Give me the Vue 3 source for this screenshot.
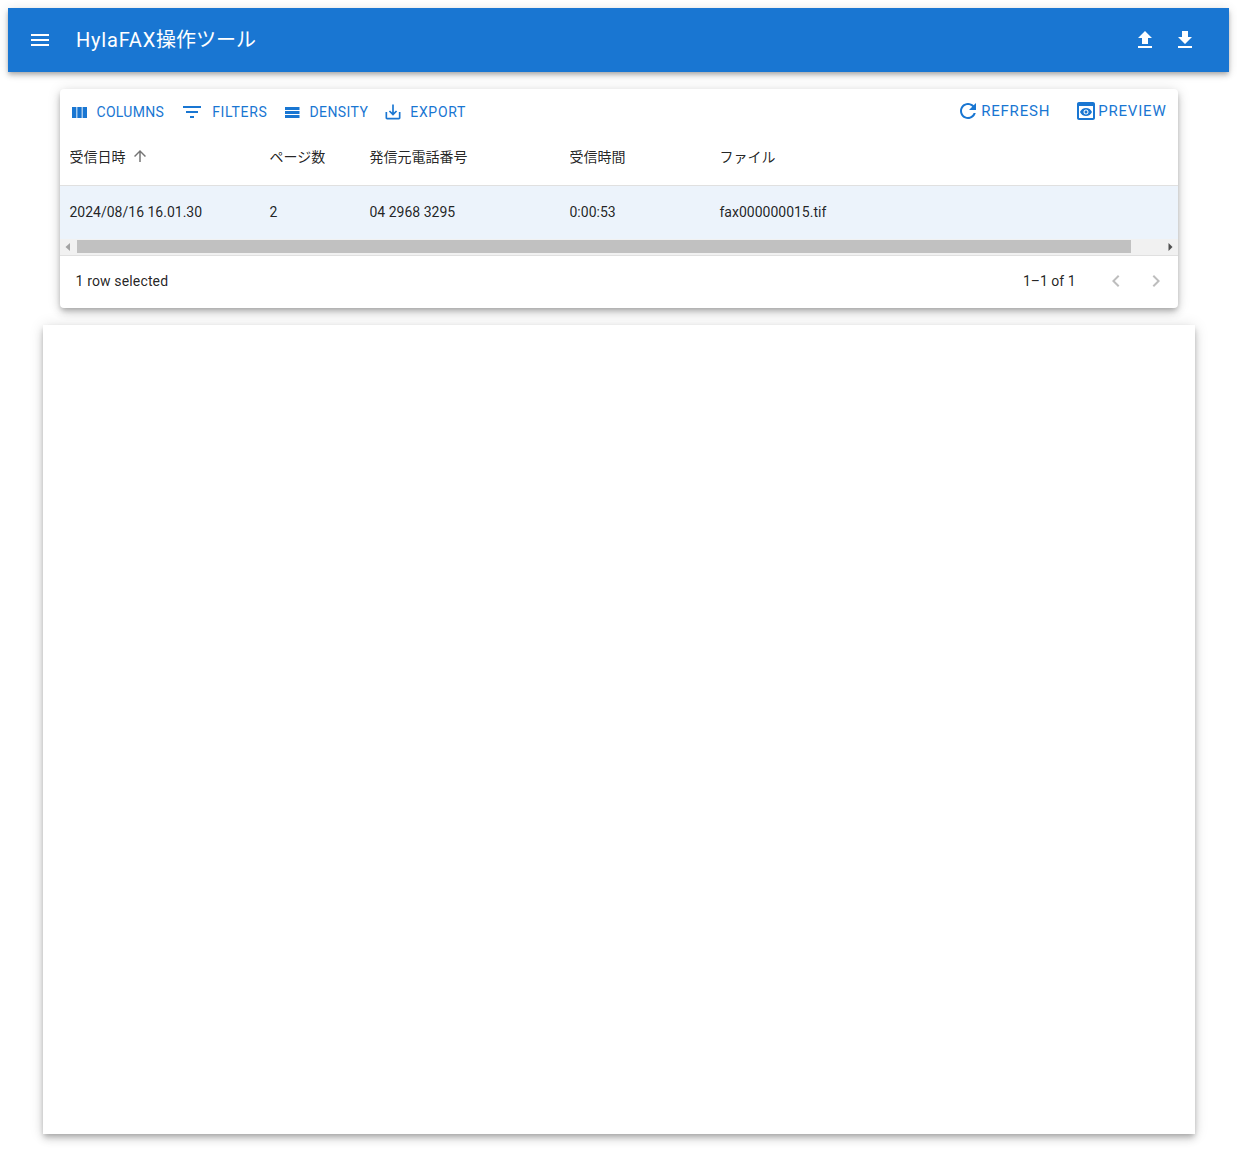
<script setup>
const columns = [
  { key: 'date', label: '受信日時', width: 200, sorted: true },
  { key: 'pages', label: 'ページ数', width: 100 },
  { key: 'from', label: '発信元電話番号', width: 200 },
  { key: 'time', label: '受信時間', width: 150 },
  { key: 'file', label: 'ファイル', width: 150 },
]
const row = {
  date: '2024/08/16 16.01.30',
  pages: '2',
  from: '04 2968 3295',
  time: '0:00:53',
  file: 'fax000000015.tif',
}
</script>

<template>
  <div class="page">
    <header class="appbar">
      <button class="menu" aria-label="menu">
        <svg class="i24" viewBox="0 0 24 24"><path d="M3 18h18v-2H3v2zm0-5h18v-2H3v2zm0-7v2h18V6H3z" /></svg>
      </button>
      <h1 class="title"><span class="brand">HylaFAX</span>操作ツール</h1>
      <div class="bar-actions">
        <svg class="i24" viewBox="0 0 24 24"><path d="M9 16h6v-6h4l-7-7-7 7h4zm-4 2h14v2H5z" /></svg>
        <svg class="i24" viewBox="0 0 24 24"><path d="M19 9h-4V3H9v6H5l7 7 7-7zM5 18v2h14v-2H5z" /></svg>
      </div>
    </header>

    <section class="grid-card">
      <div class="toolbar">
        <div class="tools">
          <span class="tool t-columns">
            <svg class="i24" viewBox="0 0 24 24"><path d="M4 7h4.400v11H4zM9.300 7h4.400v11H9.300zM14.600 7H19v11h-4.400z" /></svg>COLUMNS
          </span>
          <span class="tool t-filters">
            <svg class="i24" viewBox="0 0 24 24"><path d="M10 18h4v-2h-4v2zM3 6v2h18V6H3zm3 7h12v-2H6v2z" /></svg>FILTERS
          </span>
          <span class="tool t-density">
            <svg class="i24" viewBox="0 0 24 24"><path d="M5 7h14.500v3H5zM5 11h14.500v3H5zM5 15h14.500v3H5z" /></svg>DENSITY
          </span>
          <span class="tool t-export">
            <svg class="export" viewBox="0 0 24 24"><path d="M19 12v7H5v-7H3v7c0 1.100.9 2 2 2h14c1.100 0 2-.9 2-2v-7h-2zm-6 .67 2.590-2.580L17 11.500l-5 5-5-5 1.410-1.410L11 12.670V3h2z" /></svg>EXPORT
          </span>
        </div>
        <div class="commands">
          <span class="command">
            <svg class="i24" viewBox="0 0 24 24"><path d="M17.650 6.350C16.200 4.900 14.210 4 12 4c-4.420 0-7.990 3.580-7.990 8s3.570 8 7.990 8c3.730 0 6.840-2.550 7.730-6h-2.080c-.82 2.330-3.040 4-5.650 4-3.310 0-6-2.690-6-6s2.690-6 6-6c1.660 0 3.140.69 4.220 1.780L13 11h7V4l-2.350 2.350z" /></svg>REFRESH
          </span>
          <span class="command c-preview">
            <svg class="i24" viewBox="0 0 24 24"><path d="M19 3H5c-1.110 0-2 .9-2 2v14c0 1.100.89 2 2 2h14c1.100 0 2-.9 2-2V5c0-1.100-.89-2-2-2zm0 16H5V7h14v12zm-5.500-6c0 .83-.67 1.500-1.500 1.500s-1.500-.67-1.500-1.500.67-1.500 1.500-1.500 1.500.67 1.500 1.500zM12 9c-2.730 0-5.060 1.660-6 4 .94 2.340 3.270 4 6 4s5.060-1.660 6-4c-.94-2.340-3.270-4-6-4zm0 6.500c-1.380 0-2.500-1.120-2.500-2.500s1.120-2.500 2.500-2.500 2.500 1.120 2.500 2.500-1.120 2.500-2.500 2.500z" /></svg>PREVIEW
          </span>
        </div>
      </div>

      <div class="head">
        <div v-for="c in columns" :key="c.key" class="hcell" :style="{ width: c.width + 'px' }">
          <span>{{ c.label }}</span>
          <svg v-if="c.sorted" class="sort" viewBox="0 0 24 24"><path d="M4 12l1.410 1.410L11 7.830V20h2V7.830l5.580 5.590L20 12l-8-8-8 8z" /></svg>
        </div>
      </div>

      <div class="row">
        <div v-for="c in columns" :key="c.key" class="cell" :style="{ width: c.width + 'px' }">{{ row[c.key] }}</div>
      </div>

      <div class="scrollbar">
        <svg class="arrow start" viewBox="0 0 17 16"><path d="M10 4v8L5.500 8z" /></svg>
        <div class="track"><div class="thumb"></div></div>
        <svg class="arrow" viewBox="0 0 17 16"><path d="M7.500 4v8L11.500 8z" /></svg>
      </div>

      <footer class="footer">
        <span class="selected">1 row selected</span>
        <div class="pager">
          <span class="count">1–1 of 1</span>
          <svg class="page-btn" viewBox="0 0 24 24"><path d="M15.410 7.410 14 6l-6 6 6 6 1.410-1.410L10.830 12z" /></svg>
          <svg class="page-btn" viewBox="0 0 24 24"><path d="M10 6 8.590 7.410 13.170 12l-4.580 4.590L10 18l6-6z" /></svg>
        </div>
      </footer>
    </section>

    <section class="preview-paper"></section>
  </div>
</template>

<style>
html, body { margin: 0; background: #fff; }
</style>

<style scoped>
.page {
  box-sizing: border-box;
  padding: 8px;
  height: 1156px;
  display: flex;
  flex-direction: column;
  align-items: center;
  font-family: Roboto, "Noto Sans CJK JP", sans-serif;
  color: rgba(0, 0, 0, 0.87);
}
.appbar {
  align-self: stretch;
  height: 64px;
  flex: none;
  display: flex;
  align-items: center;
  padding: 0 24px 0 20px;
  background: #1976d2;
  color: #fff;
  box-shadow: 0 2px 4px -1px rgba(0,0,0,.2), 0 4px 5px 0 rgba(0,0,0,.14), 0 1px 10px 0 rgba(0,0,0,.12);
}
.menu {
  width: 24px;
  height: 24px;
  padding: 0;
  margin: 0;
  border: 0;
  background: none;
  color: inherit;
}
.i24 { width: 24px; height: 24px; fill: currentColor; display: block; flex: none; }
.title {
  margin: 0 0 0 24px;
  font-size: 20px;
  font-weight: 400;
  line-height: 32px;
  flex: 1;
}
.brand { letter-spacing: 0.8px; }
.bar-actions { display: flex; gap: 16px; margin-right: 8px; }

.grid-card {
  width: 1118px;
  height: 219px;
  margin-top: 17px;
  flex: none;
  background: #fff;
  border-radius: 4px;
  display: flex;
  flex-direction: column;
  box-shadow: 0 3px 5px -1px rgba(0,0,0,.2), 0 5px 8px 0 rgba(0,0,0,.14), 0 1px 14px 0 rgba(0,0,0,.12);
}
.toolbar {
  height: 44px;
  flex: none;
  display: flex;
  justify-content: space-between;
  color: #1976d2;
}
.tools { display: flex; align-items: center; height: 46px; }
.tool {
  display: flex;
  align-items: center;
  font-size: 14px;
  letter-spacing: 0.3px;
  line-height: 20px;
}
.export { width: 20px; height: 20px; fill: currentColor; flex: none; margin-right: 7px; }
.t-columns { margin-left: 8px; }
.t-columns .i24 { margin-right: 5px; }
.t-filters { margin-left: 16px; letter-spacing: 0.7px; }
.t-filters .i24 { margin-right: 8px; }
.t-density { margin-left: 13px; letter-spacing: 0.4px; }
.t-density .i24 { margin-right: 5px; }
.t-export { margin-left: 15px; letter-spacing: 0.7px; }
.commands { display: flex; align-items: center; height: 44px; padding-right: 11px; }
.command {
  display: flex;
  align-items: center;
  font-size: 15px;
  letter-spacing: 0.8px;
  line-height: 20px;
}
.command .i24 { margin-right: 1px; }
.c-preview { margin-left: 24px; }
.command.c-preview .i24 { margin-right: 0; }

.head {
  height: 52px;
  flex: none;
  display: flex;
  border-bottom: 1px solid #e0e0e0;
}
.hcell {
  flex: none;
  box-sizing: border-box;
  padding: 0 10px 6px;
  display: flex;
  align-items: center;
  font-size: 14px;
  font-weight: 400;
}
.sort { width: 18px; height: 18px; margin-left: 5px; fill: rgba(0,0,0,.54); }
.row {
  height: 53px;
  flex: none;
  display: flex;
  background: #ecf3fb;
}
.cell {
  flex: none;
  box-sizing: border-box;
  padding: 0 10px 2px;
  display: flex;
  align-items: center;
  font-size: 14px;
}
.scrollbar {
  height: 16px;
  flex: none;
  display: flex;
  align-items: flex-start;
  background: #f1f1f1;
}
.arrow { width: 17px; height: 16px; flex: none; fill: #505050; }
.arrow.start { fill: #a3a3a3; }
.track { flex: 1; height: 13px; padding-top: 1px; }
.thumb { width: 1054px; height: 100%; background: #c1c1c1; }
.footer {
  height: 52px;
  flex: none;
  display: flex;
  align-items: center;
  justify-content: space-between;
  border-top: 1px solid #e0e0e0;
  padding: 0 10px 2px 16px;
  box-sizing: border-box;
  font-size: 14px;
}
.selected { letter-spacing: 0.01071em; }
.pager { display: flex; align-items: center; }
.count { margin-right: 28px; }
.page-btn { width: 24px; height: 24px; fill: rgba(0,0,0,.26); }
.page-btn + .page-btn { margin-left: 16px; }

.preview-paper {
  width: 1152px;
  height: 809px;
  margin-top: 17px;
  flex: none;
  background: #fff;
  box-shadow: 0 3px 5px -1px rgba(0,0,0,.2), 0 5px 8px 0 rgba(0,0,0,.14), 0 1px 14px 0 rgba(0,0,0,.12);
}
</style>
